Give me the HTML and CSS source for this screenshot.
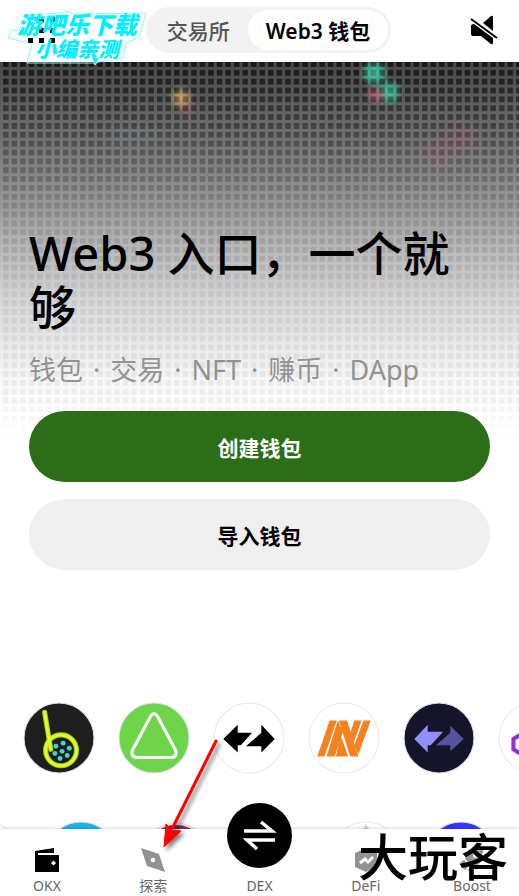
FILE: index.html
```html
<!DOCTYPE html>
<html lang="zh-CN">
<head>
    <meta charset="UTF-8">
    <meta name="viewport" content="width=device-width, initial-scale=1.0">
    <title>Web3 钱包</title>
    <link rel="stylesheet" href="styles.css">
</head>
<body>
<div class="app">

    <header class="topbar">
        <button class="icon-btn" aria-label="菜单">
            <svg width="28" height="28" viewBox="0 0 28 28">
                <path d="M12 1h5v5h-5zM23 1h5v5h-5zM12 12h5v5h-5zM23 12h5v5h-5zM1 22h5v5H1zM12 22h5v5h-5zM23 22h5v5h-5z"/>
            </svg>
        </button>
        <div class="switch">
            <button class="switch-item">交易所</button>
            <button class="switch-item active">Web3 钱包</button>
        </div>
        <button class="icon-btn" aria-label="静音">
            <svg width="28" height="32" viewBox="0 0 28 32">
                <path d="m13 9 8-7q2-1 2 1v14zM1 12q0-2 3-2l19 14v5q0 2-2 1l-10-8H3q-2 0-2-2z"/>
                <path d="M1 5 27 24" stroke="#000" stroke-width="2"/>
            </svg>
        </button>
        <div class="stamp">
            <svg class="stamp-line" width="140" height="56" viewBox="0 0 140 56" aria-hidden="true">
                <path d="m19 5 34-2 6-2 7 3 73-1-7 24-13 6-4 16-24 3-1 1H20l5-19L1 28l3-8h8z"/>
                <path class="stamp-tail" d="m85 47 3 8 4-7z"/>
            </svg>
            <div class="stamp-top">游吧乐下载</div>
            <div class="stamp-bottom">小编亲测</div>
        </div>
    </header>

    <main class="main">
        <section class="hero">
            <svg class="hero-bg" aria-hidden="true">
                <defs>
                    <linearGradient id="base" x2="0" y2="1">
                        <stop offset="0" stop-color="#484848"/>
                        <stop offset=".18" stop-color="#6e6e6e"/>
                        <stop offset=".38" stop-color="#999"/>
                        <stop offset=".47" stop-color="#b3b3b3"/>
                        <stop offset=".62" stop-color="#d5d5d5"/>
                        <stop offset=".74" stop-color="#e9e9e9"/>
                        <stop offset=".84" stop-color="#f7f7f7"/>
                        <stop offset=".92" stop-color="#fff"/>
                    </linearGradient>
                    <linearGradient id="shade" x2="0" y2="1">
                        <stop offset="0" stop-opacity=".66"/>
                        <stop offset=".18" stop-opacity=".36"/>
                        <stop offset=".38" stop-opacity=".13"/>
                        <stop offset=".6" stop-opacity=".06"/>
                        <stop offset=".88" stop-opacity=".05"/>
                        <stop offset="1" stop-opacity="0"/>
                    </linearGradient>
                    <pattern id="dots" x="3" y="-1" width="8.55" height="8.86" patternUnits="userSpaceOnUse">
                        <rect width="5.6" height="5.8" rx=".6" fill="#fff"/>
                    </pattern>
                    <mask id="grid"><rect width="100%" height="100%" fill="url(#dots)"/></mask>
                    <radialGradient id="teal"><stop stop-color="#43c6a4"/><stop offset="1" stop-color="#43c6a4" stop-opacity="0"/></radialGradient>
                    <radialGradient id="gold"><stop stop-color="#d8b070"/><stop offset="1" stop-color="#d8b070" stop-opacity="0"/></radialGradient>
                    <radialGradient id="rose"><stop stop-color="#b4667a"/><stop offset="1" stop-color="#b4667a" stop-opacity="0"/></radialGradient>
                    <radialGradient id="sky"><stop stop-color="#7fb0c4"/><stop offset="1" stop-color="#7fb0c4" stop-opacity="0"/></radialGradient>
                </defs>
                <rect width="100%" height="100%" fill="url(#base)"/>
                <circle cx="186" cy="46" r="13" fill="url(#rose)" opacity=".5"/>
                <circle cx="181" cy="36" r="14" fill="url(#gold)" opacity=".8"/>
                <circle cx="374" cy="11" r="16" fill="url(#teal)"/>
                <circle cx="389" cy="30" r="15" fill="url(#teal)"/>
                <circle cx="376" cy="33" r="12" fill="url(#rose)"/>
                <circle cx="439" cy="92" r="24" fill="url(#rose)" opacity=".3"/>
                <circle cx="461" cy="76" r="22" fill="url(#rose)" opacity=".35"/>
                <ellipse cx="132" cy="72" rx="34" ry="18" fill="url(#sky)" opacity=".15"/>
                <rect width="100%" height="100%" fill="url(#shade)" mask="url(#grid)"/>
                <circle cx="181" cy="36" r="11" fill="url(#gold)" opacity=".4"/>
                <circle cx="374" cy="11" r="14" fill="url(#teal)" opacity=".7"/>
                <circle cx="389" cy="30" r="13" fill="url(#teal)" opacity=".5"/>
                <circle cx="376" cy="33" r="10" fill="url(#rose)" opacity=".4"/>
            </svg>
            <div class="hero-content">
                <h1>Web3 入口，一个就够</h1>
                <p class="features">
                    <span>钱包</span> <span>·</span> <span>交易</span> <span>·</span> <span>NFT</span> <span>·</span> <span>赚币</span> <span>·</span> <span>DApp</span>
                </p>
                <button class="btn primary">创建钱包</button>
                <button class="btn">导入钱包</button>
            </div>
        </section>

        <section class="tokens">
            <div class="row">
                <svg viewBox="0 0 70 70"><circle cx="35" cy="35" r="34" fill="#fff" stroke="#e8e8e8"/><path d="M65 26q8 10 0 20z" fill="#f7a8b4"/></svg>
                <svg viewBox="0 0 70 70">
                    <circle cx="35" cy="35" r="34" fill="#1e1e1e" stroke="#ddd"/>
                    <g fill="none" stroke="#a9c800" stroke-width="5" stroke-linecap="round"><circle cx="37" cy="47" r="15"/><path d="m21 10 6 36"/></g>
                    <g fill="none" stroke="#d9fb3a" stroke-width="3" stroke-linecap="round"><circle cx="37" cy="47" r="15"/><path d="m21 10 6 36"/></g>
                    <g fill="#3fd6cf"><circle cx="38" cy="48" r="2.4"/><circle cx="32" cy="43" r="2.4"/><circle cx="39" cy="40" r="2.4"/><circle cx="45" cy="45" r="2.4"/><circle cx="43" cy="52" r="2.4"/><circle cx="36" cy="55" r="2.4"/><circle cx="31" cy="50" r="2.4"/></g>
                </svg>
                <svg viewBox="0 0 70 70">
                    <circle cx="35" cy="35" r="34" fill="#6ed54a" stroke="#ddd"/>
                    <path d="M31 15q4-7 8 0l17 32q2 7-5 7H19q-7 0-5-7z" fill="none" stroke="#fff" stroke-width="3" stroke-linejoin="round"/>
                </svg>
                <svg viewBox="0 0 70 70">
                    <circle cx="35" cy="35" r="34" fill="#fff" stroke="#e8e8e8"/>
                    <path d="M10 36 24 22v8h14L27 42h-3v7z"/><path d="M60 36 47 22v8L32 43h15v6z"/>
                </svg>
                <svg viewBox="0 0 70 70">
                    <circle cx="35" cy="35" r="34" fill="#fff" stroke="#e8e8e8"/>
                    <g fill="#f58220"><path d="M21 18h7L16 53H9z"/><path d="m29 18 5 11-8 24h-8z"/><path d="M30 18h8l11 35h-8z"/><path d="m32 33 7 20H27z"/><path d="M45 18h7l-9 26-3-10z"/><path d="M54 18h7L49 51l-4-9z"/></g>
                </svg>
                <svg viewBox="0 0 70 70">
                    <circle cx="35" cy="35" r="34" fill="#14152a" stroke="#ddd"/>
                    <path d="M59 36 46 23v7L32 42h14v6z" fill="#55559d"/><path d="M11 36 24 22v7h15L27 42h-3v7z" fill="#8f8fff"/>
                </svg>
                <svg viewBox="0 0 70 70">
                    <circle cx="35" cy="35" r="34" fill="#fff" stroke="#e8e8e8"/>
                    <path d="m23 31 8 5v10l-8 5-8-5V36zM47 19l8 5v10l-8 5-8-5V24z" fill="none" stroke="#9a2fd0" stroke-width="4"/>
                </svg>
            </div>
            <div class="row second">
                <svg viewBox="0 0 70 70"><circle cx="35" cy="35" r="34" fill="#fff" stroke="#e8e8e8"/></svg>
                <svg viewBox="0 0 70 70"><circle cx="35" cy="35" r="34" fill="#18b4ea" stroke="#ddd"/></svg>
                <svg viewBox="0 0 70 70"><circle cx="35" cy="35" r="34" fill="#f0e4dc"/><circle cx="35" cy="35" r="31" fill="#8a2856"/></svg>
                <svg viewBox="0 0 70 70"><circle cx="35" cy="35" r="34" fill="#fff" stroke="#e8e8e8"/></svg>
                <svg viewBox="0 0 70 70"><circle cx="35" cy="35" r="34" fill="#fff" stroke="#e8e8e8"/><path d="m35 3 18 30-18 11-18-11z" fill="#b7dcec"/></svg>
                <svg viewBox="0 0 70 70"><circle cx="35" cy="35" r="34" fill="#3038ff" stroke="#ddd"/></svg>
            </div>
        </section>
    </main>

    <nav class="tabbar">
        <a href="#">
            <svg width="24" height="24" viewBox="0 0 24 24"><path d="M0 3 19 0v5H3v2h21v17H0z"/><path d="m18.500 12.500 2.500 2.500-2.500 2.500L16 15z" fill="#fff"/></svg>
            <span>OKX</span>
        </a>
        <a href="#">
            <svg width="24" height="24" viewBox="0 0 24 24"><path d="m0 0 18 6 6 18-18-6z" fill="#929292"/><circle cx="12" cy="12" r="2.300" fill="#fff"/></svg>
            <span>探索</span>
        </a>
        <a href="#" class="dex">
            <svg width="65" height="65" viewBox="0 0 65 65"><circle cx="32.500" cy="32.500" r="32.500"/><path d="M17 28h28L34 19M48 37H20l10 9" fill="none" stroke="#fff" stroke-width="3.500"/></svg>
            <span>DEX</span>
        </a>
        <a href="#">
            <svg width="24" height="24" viewBox="0 0 24 24"><path d="m12 0 11 5v14l-11 5-11-5V5z" fill="#929292"/><path d="m6 15 5-4 3 3 5-5" fill="none" stroke="#fff" stroke-width="3"/></svg>
            <span>DeFi</span>
        </a>
        <a href="#">
            <svg width="24" height="24" viewBox="0 0 24 24"><path d="M8 4 24 0l-4 15-6 5-9-9z" fill="#929292"/><circle cx="15" cy="8" r="2" fill="#fff"/><path d="m1 16 4-3M4 21l4-4M9 23l3-3" stroke="#929292" stroke-width="3"/></svg>
            <span>Boost</span>
        </a>
        <div class="brand">大玩客</div>
        <svg class="pointer" width="64" height="116" viewBox="0 0 64 116" aria-hidden="true">
            <path d="m56 4-43 86" stroke="#f00" stroke-width="3" stroke-linecap="round"/>
            <path d="m4 110 2-23 6 6 9 1z" fill="#f00" stroke="#f00"/>
        </svg>
    </nav>

</div>
</body>
</html>
```

FILE: styles.css
```css
* {
    box-sizing: border-box;
}

body {
    margin: 0;
    background-color: #fff;
    color: #000;
    font-family: "Noto Sans", "Noto Sans CJK SC", sans-serif;
}

button {
    border: none;
    padding: 0;
    background: none;
    color: inherit;
    font-family: inherit;
    cursor: pointer;
}

.app {
    display: flex;
    flex-direction: column;
    height: 100vh;
    overflow: hidden;
}

/* Top bar */
.topbar {
    position: relative;
    z-index: 2;
    display: flex;
    flex-shrink: 0;
    align-items: center;
    justify-content: space-between;
    height: 62px;
    padding: 0 21px 2px 27px;
}

.icon-btn {
    display: flex;
}

.switch {
    display: flex;
    height: 46px;
    margin-left: 12px;
    padding: 3px;
    border-radius: 23px;
    background-color: #f2f2f2;
}

.switch-item {
    padding: 0 18px;
    border-radius: 20px;
    color: #555;
    font-size: 21px;
    font-weight: 500;
}

.switch-item.active {
    background-color: #fff;
    color: #000;
    font-weight: 600;
}

.stamp {
    position: absolute;
    top: 12px;
    left: 17px;
    color: #00f0ff;
    font-style: italic;
    font-weight: 900;
    text-align: center;
}

.stamp-line {
    position: absolute;
    top: -2px;
    left: -10px;
    fill: none;
    stroke: #8ff4fa;
    overflow: visible;
}

.stamp-tail {
    fill: #00f0ff;
}

.stamp-top {
    position: relative;
    font-size: 24px;
    line-height: 26px;
}

.stamp-bottom {
    position: relative;
    font-size: 21px;
    line-height: 22px;
}

/* Hero */
.main {
    display: flex;
    flex: 1;
    flex-direction: column;
    min-height: 0;
    overflow: hidden;
}

.hero {
    position: relative;
    padding: 164px 29px 0;
}

.hero-bg {
    position: absolute;
    top: 0;
    left: 0;
    width: 100%;
    height: 380px;
}

.hero-content {
    position: relative;
    display: flex;
    flex-direction: column;
}

h1 {
    margin: 0;
    font-size: 47px;
    font-weight: 500;
    line-height: 54px;
}

.features {
    display: flex;
    gap: 10px;
    margin: 18px 0 23px;
    color: #929292;
    font-size: 27px;
    line-height: 36px;
}

.btn {
    height: 71px;
    border-radius: 36px;
    background-color: #efefef;
    font-size: 21px;
    font-weight: 700;
}

.btn.primary {
    margin-bottom: 17px;
    background-color: #2c6e18;
    color: #fff;
}

/* Token wall */
.tokens {
    display: flex;
    flex-direction: column;
    gap: 47px;
    padding-top: 132px;
}

.row {
    display: flex;
    gap: 23px;
    margin-left: -72px;
}

.row.second {
    margin-left: -50px;
}

.row svg {
    flex: none;
    width: 72px;
    height: 72px;
}

/* Bottom tabs */
.tabbar {
    position: relative;
    display: flex;
    flex-shrink: 0;
    align-items: flex-end;
    justify-content: space-between;
    height: 67px;
    padding: 0 14px;
    background-color: #fff;
    box-shadow: 0 -1px 3px rgba(0, 0, 0, 0.15);
}

.tabbar a {
    display: flex;
    flex-direction: column;
    align-items: center;
    gap: 4px;
    width: 66px;
    color: #666;
    font-size: 14px;
    line-height: 20px;
    text-decoration: none;
}

.tabbar .dex {
    gap: 8px;
}

.brand {
    position: absolute;
    right: 11px;
    bottom: 14px;
    color: #000;
    font-size: 50px;
    font-weight: 500;
    line-height: 50px;
    text-shadow: 0 0 1px #e8dfb8;
}

.pointer {
    position: absolute;
    bottom: 43px;
    left: 160px;
    fill: none;
    filter: drop-shadow(3px 3px 2px rgba(0, 0, 0, 0.5));
}
```
